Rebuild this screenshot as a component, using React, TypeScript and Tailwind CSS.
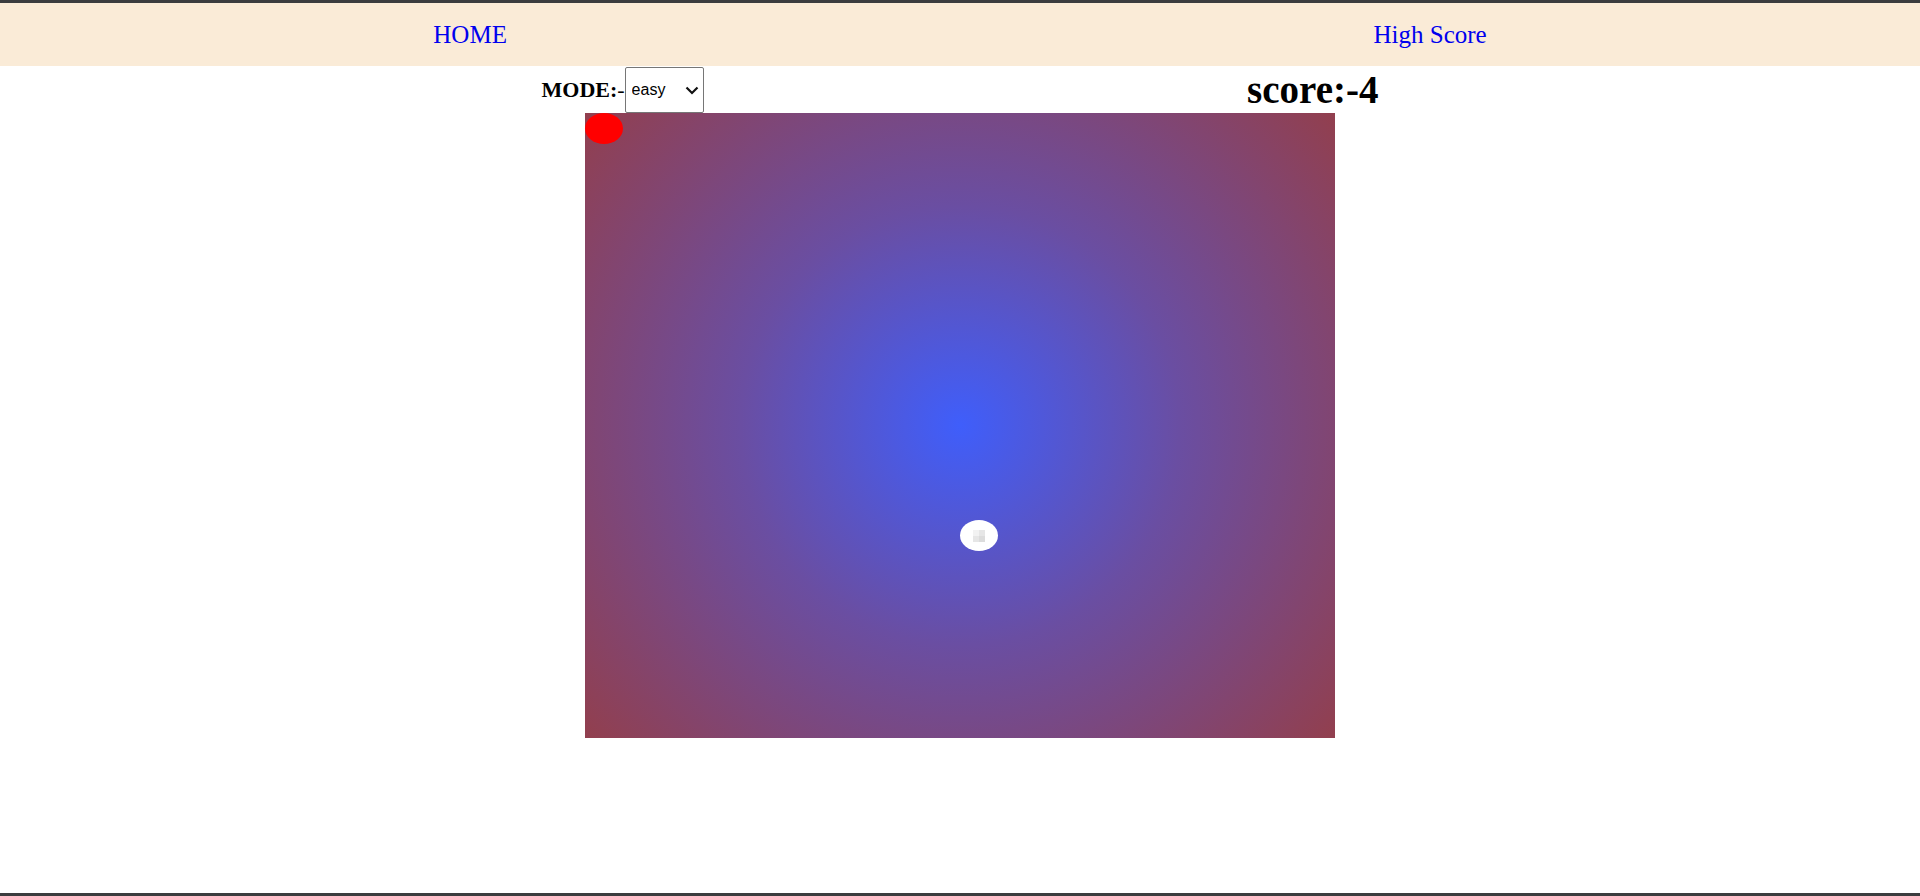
import { useState } from "react";

export default function App() {
  const [mode, setMode] = useState("easy");
  const score = -4;

  return (
    <div className="h-screen flex flex-col bg-white border-t-[3px] border-b-[3px] border-[#3b3c3e] font-['Liberation_Serif',serif] overflow-hidden">
      <nav className="flex h-[63px] shrink-0 items-center justify-around bg-[#faebd7] text-[25px] text-[#0000ee]">
        <a href="#">HOME</a>
        <a href="#">High Score</a>
      </nav>

      <div className="mx-auto flex h-[47px] w-[837px] items-end justify-between">
        <div className="flex h-full items-center">
          <label className="text-[22px] font-bold text-black">MODE:</label>
          <span className="text-[22px] text-black">-</span>
          <div className="relative h-[46px] w-[79px]">
            <select
              value={mode}
              onChange={(e) => setMode(e.target.value)}
              className="h-full w-full appearance-none rounded-[2px] border border-[#767676] bg-white pl-[6px] font-['Liberation_Sans',sans-serif] text-[16px] text-black outline-none"
            >
              <option value="easy">easy</option>
              <option value="medium">medium</option>
              <option value="hard">hard</option>
            </select>
            <svg
              className="pointer-events-none absolute right-[5px] top-[18px]"
              width="14"
              height="10"
              viewBox="0 0 14 10"
            >
              <path d="M1.5 2.5 L7 8 L12.5 2.5" fill="none" stroke="#111" strokeWidth="2.2" />
            </svg>
          </div>
        </div>
        <h1 className="mb-[4px] text-[39px] font-bold leading-none text-black">score:{score}</h1>
      </div>

      <div className="mx-auto relative h-[625px] w-[750px] shrink-0 bg-[radial-gradient(circle,#3f5efb_0%,#6a4ea2_45%,#923f4e_100%)]">
        <div className="absolute left-0 top-0 h-[31px] w-[38px] rounded-[50%] bg-[#ff0000]" />
        <div className="absolute left-[375px] top-[407px] grid h-[31px] w-[38px] place-items-center rounded-[50%] bg-white">
          <div className="grid grid-cols-2">
            <span className="h-[6px] w-[6px] bg-[#f2f2f2]" />
            <span className="h-[6px] w-[6px] bg-[#e6e6e6]" />
            <span className="h-[6px] w-[6px] bg-[#e6e6e6]" />
            <span className="h-[6px] w-[6px] bg-[#dcdcdc]" />
          </div>
        </div>
      </div>
    </div>
  );
}
